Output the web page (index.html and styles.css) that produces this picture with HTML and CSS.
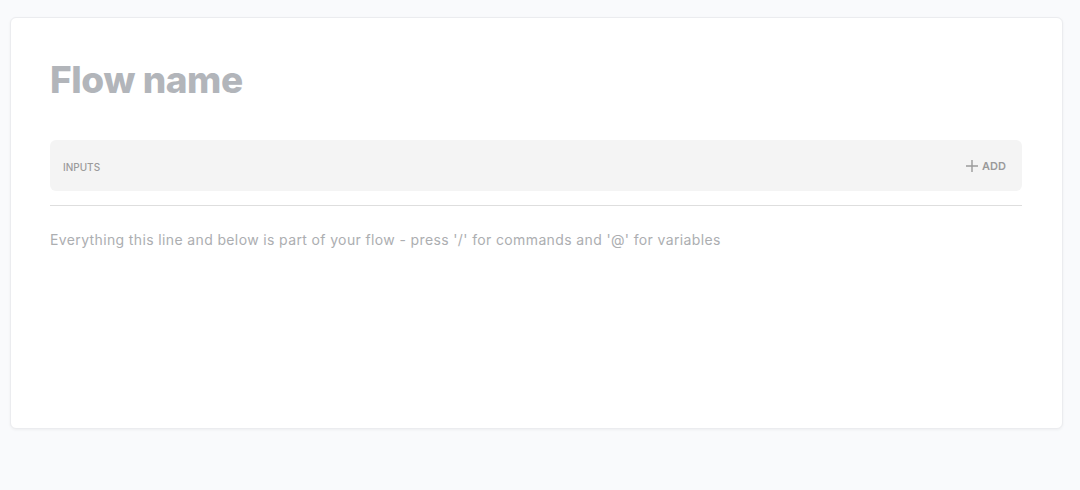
FILE: index.html
```html
<!DOCTYPE html>
<html lang="en">
<head>
  <meta charset="UTF-8">
  <meta name="viewport" content="width=device-width, initial-scale=1.0">
  <title>Flow editor</title>
  <link rel="stylesheet" href="styles.css">
</head>
<body>
  <div class="page">
    <div class="card">
      <h1 class="flow-name">Flow name</h1>

      <div class="inputs-bar">
        <span class="inputs-label">Inputs</span>
        <button class="add-btn">
          <svg width="14" height="14" viewBox="0 0 14 14" aria-hidden="true">
            <path d="M7 1v12M1 7h12" stroke="currentColor" stroke-width="1.4" fill="none"/>
          </svg>
          Add
        </button>
      </div>

      <hr class="divider">

      <p class="hint">Everything this line and below is part of your flow - press '/' for commands and '@' for variables</p>
    </div>
  </div>
</body>
</html>
```

FILE: styles.css
```css
html, body {
  margin: 0;
  padding: 0;
  height: 100%;
}
body {
  font-family: Inter, "Noto Sans", sans-serif;
  background-color: #f9fafc;
}
.page {
  padding: 17px 17px 0 10px;
}
.card {
  background: white;
  border: 1px solid #ebecef;
  border-radius: 6px;
  box-shadow: 0 1px 3px rgba(0,0,0,0.05);
  padding: 40px 40px 0 39px;
  height: 370px;
}
.flow-name {
  margin: 0;
  font-size: 37px;
  line-height: 44px;
  font-weight: 800;
  letter-spacing: -0.4px;
  color: #b2b5ba;
}
.inputs-bar {
  display: flex;
  align-items: center;
  justify-content: space-between;
  margin-top: 38px;
  height: 51px;
  padding: 0 16px 0 13px;
  background: #f4f4f4;
  border-radius: 6px;
}
.inputs-label {
  font-size: 10px;
  font-weight: 500;
  text-transform: uppercase;
  color: #9b9b9b;
  padding-top: 2px;
}
.add-btn {
  display: flex;
  align-items: center;
  gap: 3px;
  background: none;
  border: none;
  padding: 0;
  font-family: inherit;
  font-size: 11px;
  font-weight: 600;
  text-transform: uppercase;
  color: #9a9a9a;
  cursor: pointer;
}
.divider {
  margin: 14px 0 0 0;
  border: none;
  border-top: 1px solid #dedede;
}
.hint {
  margin: 24px 0 0 0;
  font-size: 14px;
  line-height: 20px;
  letter-spacing: 0.37px;
  color: #acaeb1;
}
```
